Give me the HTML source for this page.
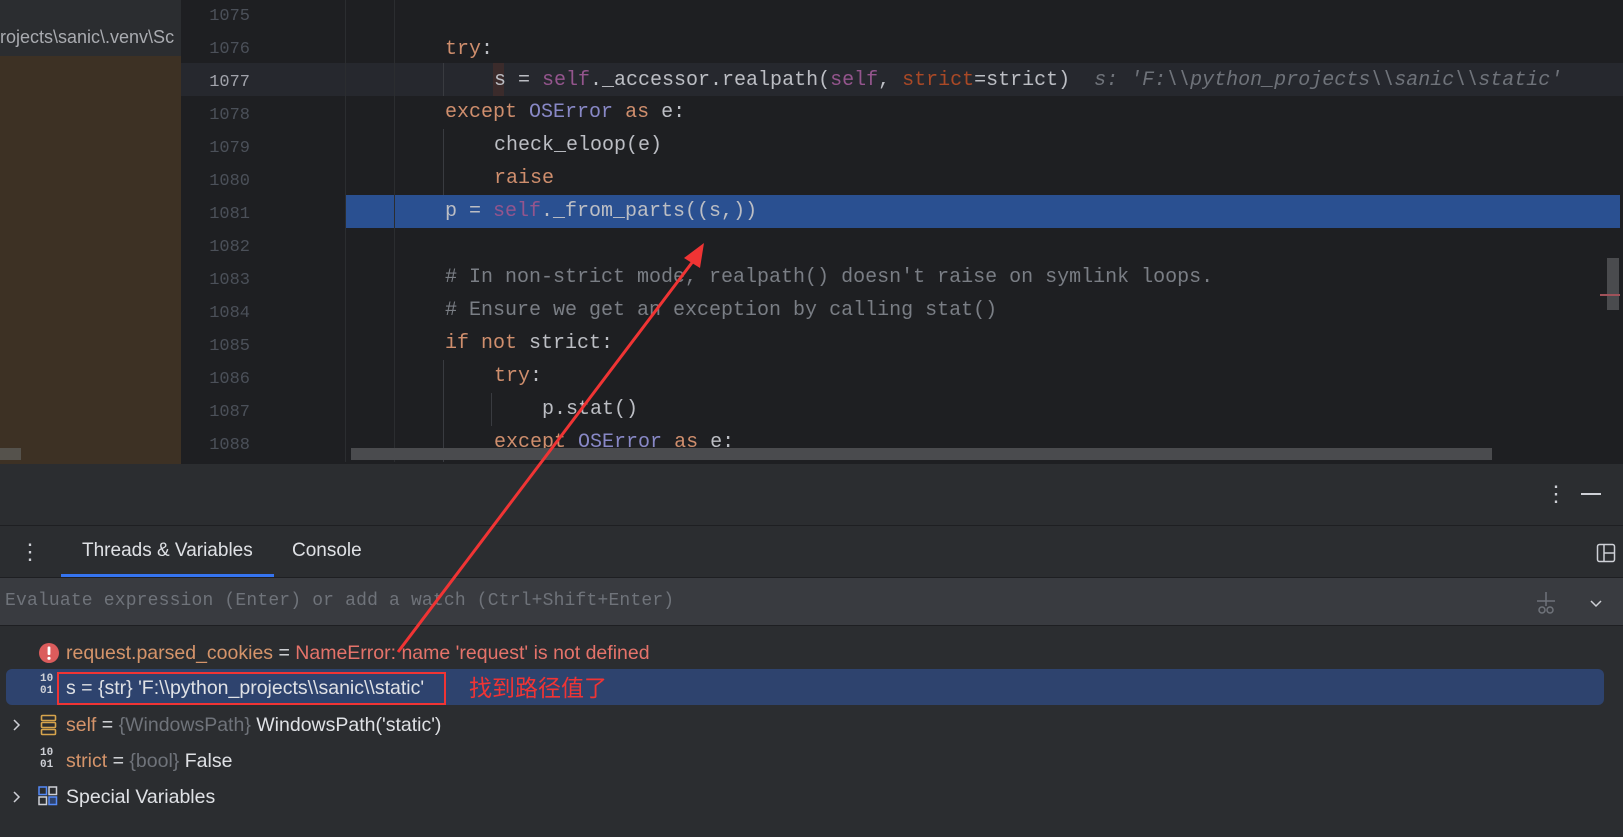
<!DOCTYPE html>
<html><head><meta charset="utf-8"><style>
*{margin:0;padding:0;box-sizing:border-box}
body{width:1623px;height:837px;overflow:hidden;background:#2b2d30;position:relative;font-family:"Liberation Sans","Noto Sans CJK SC",sans-serif}
.a{position:absolute}
.code{font-family:"Liberation Mono",monospace;font-size:20px;color:#bcbec4;white-space:pre;line-height:33px;height:33px}
.ln{font-family:"Liberation Mono",monospace;font-size:17px;color:#4b5059;width:70px;text-align:right;line-height:33px;height:33px}
.k{color:#cf8e6d}.s{color:#94558d}.b{color:#8888c6}.c{color:#7a7e85}.n{color:#aa4926}
.v{font-size:19.5px;color:#dfe1e5;white-space:nowrap;line-height:36px;height:36px}
.o{color:#d5946a}.g{color:#6f737a}.e{color:#e5736a}
</style></head><body>
<div class="a" style="left:0;top:0;width:181px;height:56px;background:#2b2d30"></div>
<div class="a" style="left:0;top:27px;font-size:18px;color:#a9abb0;white-space:nowrap;width:181px;overflow:hidden">rojects\sanic\.venv\Sc</div>
<div class="a" style="left:0;top:56px;width:181px;height:408px;background:#3d3124"></div>
<div class="a" style="left:0;top:448px;width:21px;height:12px;background:#55524c"></div>
<div class="a" style="left:181px;top:0;width:1442px;height:464px;background:#1e1f22"></div>
<div class="a" style="left:181px;top:63px;width:1442px;height:33px;background:#26282e"></div>
<div class="a" style="left:345px;top:195px;width:1275px;height:33px;background:#2a5091"></div>
<div class="a" style="left:345px;top:0;width:1px;height:464px;background:#2b2d30"></div>
<div class="a" style="left:394px;top:0;width:1px;height:464px;background:#2b2d30"></div>
<div class="a" style="left:443px;top:63px;width:1px;height:33px;background:#393b40"></div>
<div class="a" style="left:443px;top:129px;width:1px;height:66px;background:#393b40"></div>
<div class="a" style="left:443px;top:360px;width:1px;height:104px;background:#393b40"></div>
<div class="a" style="left:491px;top:393px;width:1px;height:33px;background:#393b40"></div>
<div class="a" style="left:493px;top:63px;width:11px;height:33px;background:#3b2b2b"></div>

<div class="a ln" style="left:180px;top:0">1075</div>
<div class="a ln" style="left:180px;top:33px">1076</div>
<div class="a ln" style="left:180px;top:66px;color:#a1a3ab">1077</div>
<div class="a ln" style="left:180px;top:99px">1078</div>
<div class="a ln" style="left:180px;top:132px">1079</div>
<div class="a ln" style="left:180px;top:165px">1080</div>
<div class="a ln" style="left:180px;top:198px">1081</div>
<div class="a ln" style="left:180px;top:231px">1082</div>
<div class="a ln" style="left:180px;top:264px">1083</div>
<div class="a ln" style="left:180px;top:297px">1084</div>
<div class="a ln" style="left:180px;top:330px">1085</div>
<div class="a ln" style="left:180px;top:363px">1086</div>
<div class="a ln" style="left:180px;top:396px">1087</div>
<div class="a ln" style="left:180px;top:429px">1088</div>

<div class="a code" style="left:445px;top:33px"><span class="k">try</span>:</div>
<div class="a code" style="left:494px;top:64px">s = <span class="s">self</span>._accessor.realpath(<span class="s">self</span>, <span class="n">strict</span>=strict)  <i style="color:#6f737a">s: 'F:\\python_projects\\sanic\\static'</i></div>
<div class="a code" style="left:445px;top:96px"><span class="k">except</span> <span class="b">OSError</span> <span class="k">as</span> e:</div>
<div class="a code" style="left:494px;top:129px">check_eloop(e)</div>
<div class="a code" style="left:494px;top:162px"><span class="k">raise</span></div>
<div class="a code" style="left:445px;top:195px">p = <span class="s">self</span>._from_parts((s,))</div>
<div class="a code c" style="left:445px;top:261px"># In non-strict mode, realpath() doesn't raise on symlink loops.</div>
<div class="a code c" style="left:445px;top:294px"># Ensure we get an exception by calling stat()</div>
<div class="a code" style="left:445px;top:327px"><span class="k">if not</span> strict:</div>
<div class="a code" style="left:494px;top:360px"><span class="k">try</span>:</div>
<div class="a code" style="left:542px;top:393px">p.stat()</div>
<div class="a code" style="left:494px;top:426px"><span class="k">except</span> <span class="b">OSError</span> <span class="k">as</span> e:</div>
<div class="a" style="left:351px;top:448px;width:1141px;height:12px;background:#4a4b4e"></div>
<div class="a" style="left:1607px;top:258px;width:12px;height:52px;background:#4a4b4e"></div>
<div class="a" style="left:1600px;top:294px;width:20px;height:2px;background:#a0525a"></div>
<div class="a" style="left:181px;top:462px;width:1442px;height:2px;background:#1e1f22"></div>

<div class="a" style="left:1545px;top:480px;font-size:22px;color:#ced0d6;line-height:28px">⋮</div>
<div class="a" style="left:1581px;top:493px;width:20px;height:2px;background:#ced0d6"></div>
<div class="a" style="left:0;top:525px;width:1623px;height:1px;background:#1e1f22"></div>
<div class="a" style="left:19px;top:538px;font-size:22px;color:#ced0d6;line-height:28px">⋮</div>
<div class="a" style="left:82px;top:540px;font-size:19px;color:#dfe1e5">Threads &amp; Variables</div>
<div class="a" style="left:292px;top:540px;font-size:19px;color:#dfe1e5">Console</div>
<div class="a" style="left:61px;top:574px;width:213px;height:3px;background:#3574f0"></div>
<svg class="a" style="left:1596px;top:543px" width="20" height="20" viewBox="0 0 20 20"><rect x="1.5" y="1.5" width="17" height="17" rx="2" fill="none" stroke="#ced0d6" stroke-width="1.5"/><line x1="8" y1="1.5" x2="8" y2="18.5" stroke="#ced0d6" stroke-width="1.5"/><line x1="8" y1="10" x2="18.5" y2="10" stroke="#ced0d6" stroke-width="1.5"/></svg>
<div class="a" style="left:0;top:577px;width:1623px;height:49px;background:#393b40;border-top:1px solid #1e1f22;border-bottom:1px solid #1e1f22"></div>
<div class="a" style="left:5px;top:591px;font-family:'Liberation Mono',monospace;font-size:18px;letter-spacing:0.17px;color:#6f737a;white-space:pre">Evaluate expression (Enter) or add a watch (Ctrl+Shift+Enter)</div>
<svg class="a" style="left:1534px;top:590px" width="24" height="26" viewBox="0 0 24 26"><line x1="12" y1="2" x2="12" y2="16" stroke="#6f737a" stroke-width="1.5"/><line x1="3" y1="11" x2="21" y2="11" stroke="#6f737a" stroke-width="1.5"/><circle cx="8" cy="20" r="3" fill="none" stroke="#6f737a" stroke-width="1.5"/><circle cx="16" cy="20" r="3" fill="none" stroke="#6f737a" stroke-width="1.5"/></svg>
<svg class="a" style="left:1588px;top:596px" width="16" height="14" viewBox="0 0 16 14"><path d="M3 5 L8 10 L13 5" fill="none" stroke="#ced0d6" stroke-width="1.5"/></svg>

<div class="a" style="left:6px;top:669px;width:1598px;height:36px;background:#2e436e;border-radius:6px"></div>
<svg class="a" style="left:38px;top:642px" width="22" height="22"><circle cx="11" cy="11" r="10" fill="#db5c5c"/><rect x="9.6" y="4.5" width="2.8" height="8.5" rx="1" fill="#fff"/><circle cx="11" cy="16.3" r="1.6" fill="#fff"/></svg>
<div class="a v" style="left:66px;top:635px"><span class="o">request.parsed_cookies</span> = <span class="e">NameError: name 'request' is not defined</span></div>

<div class="a" style="left:40px;top:673px;font-family:'Liberation Mono',monospace;font-weight:bold;font-size:11px;line-height:12px;color:#ced0d6">10<br>01</div>
<div class="a v" style="left:66px;top:670px">s = {str} 'F:\\python_projects\\sanic\\static'</div>
<div class="a" style="left:57px;top:672px;width:389px;height:33px;border:2px solid #f03434"></div>
<div class="a" style="left:469px;top:670px;font-size:23px;line-height:36px;color:#f03434">找到路径值了</div>

<svg class="a" style="left:11px;top:718px" width="12" height="14"><path d="M3 2 L8 7 L3 12" fill="none" stroke="#ced0d6" stroke-width="1.5"/></svg>
<svg class="a" style="left:40px;top:714px" width="18" height="22"><rect x="1.5" y="1.5" width="14" height="5" rx="1" fill="none" stroke="#d6a44c" stroke-width="1.6"/><rect x="1.5" y="8.5" width="14" height="5" rx="1" fill="none" stroke="#d6a44c" stroke-width="1.6"/><rect x="1.5" y="15.5" width="14" height="5" rx="1" fill="none" stroke="#d6a44c" stroke-width="1.6"/></svg>
<div class="a v" style="left:66px;top:707px"><span class="o">self</span> = <span class="g">{WindowsPath}</span> WindowsPath('static')</div>

<div class="a" style="left:40px;top:747px;font-family:'Liberation Mono',monospace;font-weight:bold;font-size:11px;line-height:12px;color:#ced0d6">10<br>01</div>
<div class="a v" style="left:66px;top:743px"><span class="o">strict</span> = <span class="g">{bool}</span> False</div>

<svg class="a" style="left:11px;top:790px" width="12" height="14"><path d="M3 2 L8 7 L3 12" fill="none" stroke="#ced0d6" stroke-width="1.5"/></svg>
<svg class="a" style="left:38px;top:786px" width="20" height="20"><rect x="1" y="1" width="7.5" height="7.5" fill="none" stroke="#548af7" stroke-width="1.5"/><rect x="11" y="1" width="7.5" height="7.5" fill="none" stroke="#ced0d6" stroke-width="1.5"/><rect x="1" y="11" width="7.5" height="7.5" fill="none" stroke="#ced0d6" stroke-width="1.5"/><rect x="11" y="11" width="7.5" height="7.5" fill="#2e436e" stroke="#548af7" stroke-width="1.5"/></svg>
<div class="a v" style="left:66px;top:779px">Special Variables</div>

<svg class="a" style="left:0;top:0" width="1623" height="837"><line x1="398" y1="652" x2="697" y2="256" stroke="#f03434" stroke-width="3"/><path d="M704 243 L684 258 L700 268 Z" fill="#f03434"/></svg>
</body></html>
